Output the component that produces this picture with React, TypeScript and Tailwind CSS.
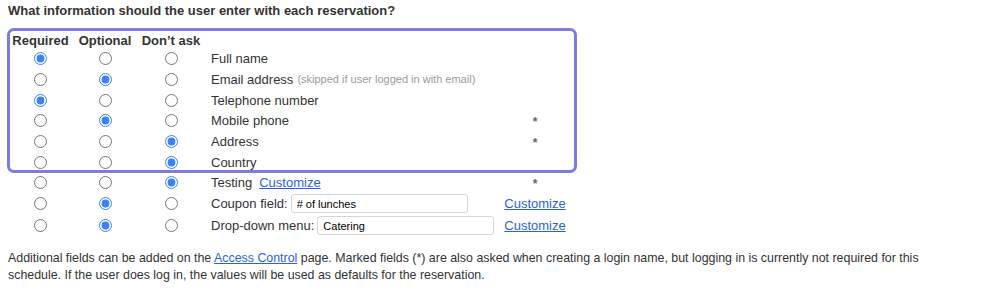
type Choice = 'req' | 'opt' | 'no'

interface Field {
  key: string
  choice: Choice
  label: React.ReactNode
  extra?: React.ReactNode
}

const font = { fontFamily: '"Liberation Sans", Arial, sans-serif' }

function Radio({ checked }: { checked: boolean }) {
  return (
    <div className="flex justify-center">
      <input
        type="radio"
        readOnly
        checked={checked}
        className="m-0 h-[13px] w-[13px] accent-[#3b82f6]"
      />
    </div>
  )
}

function Star() {
  return <span className="relative top-[1px] text-[12px] font-bold leading-none text-[#666]">*</span>
}

function Customize() {
  return <a href="#" className="text-[13px] text-[#2a63d6] underline">Customize</a>
}

function Row({ field, height = 'h-[20.67px]' }: { field: Field; height?: string }) {
  return (
    <div className={`grid grid-cols-[65px_64px_68px_294px_72px] items-center ${height}`}>
      <Radio checked={field.choice === 'req'} />
      <Radio checked={field.choice === 'opt'} />
      <Radio checked={field.choice === 'no'} />
      <div className="pl-[6px] flex items-center whitespace-nowrap text-[13px] text-[#333]">{field.label}</div>
      <div className="flex justify-center">{field.extra}</div>
    </div>
  )
}

function TextBox({ value }: { value: string }) {
  return (
    <input
      readOnly
      value={value}
      className="w-[177px] h-[19px] ml-[3px] rounded-[3px] border border-[#d6d6d6] bg-white px-[5px] text-[11px] text-black outline-none"
    />
  )
}

const boxed: Field[] = [
  { key: 'name', choice: 'req', label: 'Full name' },
  {
    key: 'email',
    choice: 'opt',
    label: (
      <>
        Email address
        <span className="ml-[4px] text-[11px] text-[#9a9a9a]">(skipped if user logged in with email)</span>
      </>
    ),
  },
  { key: 'tel', choice: 'req', label: 'Telephone number' },
  { key: 'mobile', choice: 'opt', label: 'Mobile phone', extra: <Star /> },
  { key: 'address', choice: 'no', label: 'Address', extra: <Star /> },
  { key: 'country', choice: 'no', label: 'Country' },
]

export default function App() {
  return (
    <div className="bg-white w-[984px] h-[300px] px-2 pt-[3px]" style={font}>
      <div className="text-[13px] leading-[16px] font-bold text-[#333]">
        What information should the user enter with each reservation?
      </div>

      {/* highlighted group: outline drawn inward so rows keep their spacing */}
      <div className="mt-[9px] -ml-px w-[570px] pl-px pt-[3px] rounded-[7px] outline-3 -outline-offset-3 outline-[#7b7be8]">
        <div className="grid grid-cols-[65px_64px_68px_294px_72px] items-center h-[17.67px] text-[13px] font-bold text-[#333]">
          <div className="text-center">Required</div>
          <div className="text-center">Optional</div>
          <div className="text-center">Don’t ask</div>
        </div>
        {boxed.map((f) => (
          <Row key={f.key} field={f} />
        ))}
      </div>

      <Row
        field={{
          key: 'testing',
          choice: 'no',
          label: (
            <>
              Testing
              <span className="ml-[7px]">
                <Customize />
              </span>
            </>
          ),
          extra: <Star />,
        }}
      />
      <Row
        height="h-[21.33px]"
        field={{
          key: 'coupon',
          choice: 'opt',
          label: (
            <>
              Coupon field:
              <TextBox value="# of lunches" />
            </>
          ),
          extra: <Customize />,
        }}
      />
      <Row
        height="h-[22.3px]"
        field={{
          key: 'menu',
          choice: 'opt',
          label: (
            <>
              Drop-down menu:
              <TextBox value="Catering" />
            </>
          ),
          extra: <Customize />,
        }}
      />

      <p className="mt-[13px] w-[930px] text-[12.4px] leading-[17px] text-[#333]">
        Additional fields can be added on the{' '}
        <a href="#" className="text-[#2a63d6] underline">Access Control</a> page. Marked fields (*) are also
        asked when creating a login name, but logging in is currently not required for this schedule. If the
        user does log in, the values will be used as defaults for the reservation.
      </p>
    </div>
  )
}
